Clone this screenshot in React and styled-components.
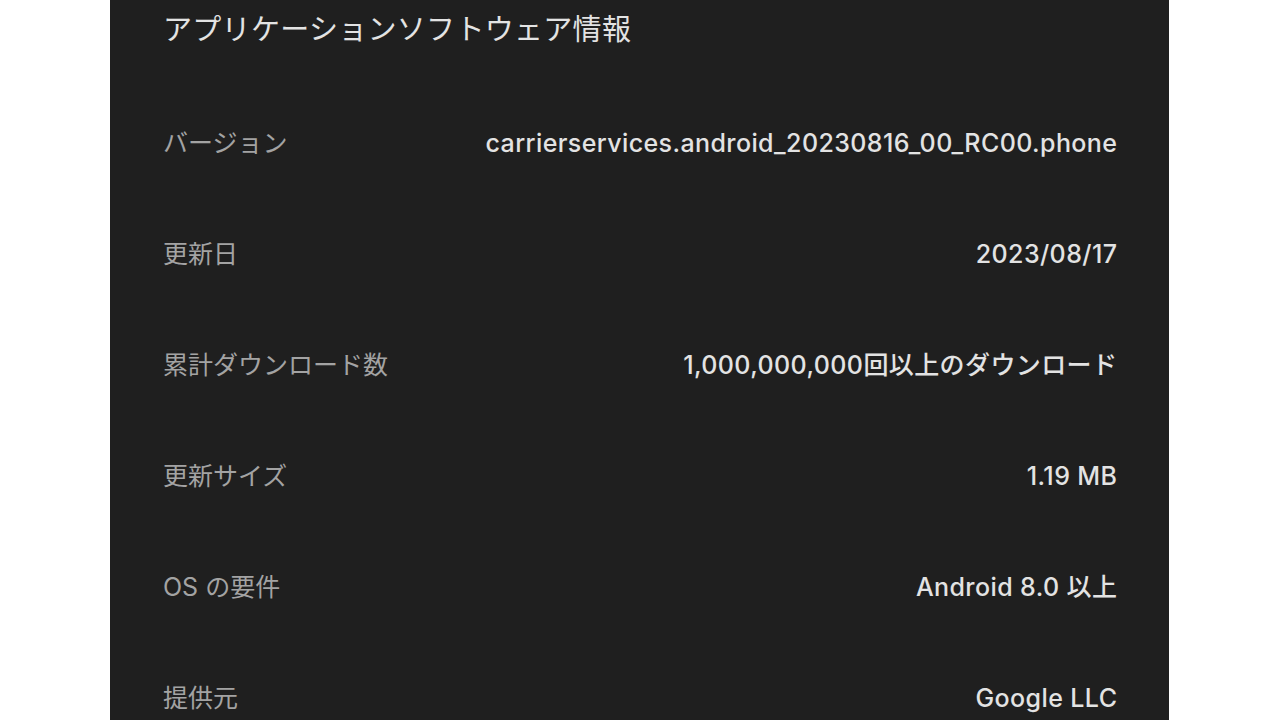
import styled, { createGlobalStyle } from 'styled-components';

const GlobalStyle = createGlobalStyle`
  html, body {
    margin: 0;
    padding: 0;
    background: #ffffff;
  }
  body {
    font-family: Inter, "Noto Sans CJK JP", sans-serif;
  }
`;

const Page = styled.div`
  width: 1280px;
  height: 720px;
  overflow: hidden;
  display: flex;
  justify-content: flex-start;
  background: #ffffff;
`;

const Panel = styled.section`
  margin-left: 110px;
  width: 1059px;
  height: 720px;
  background: #1f1f1f;
  box-sizing: border-box;
  padding: 0 52px 0 53px;
  display: flex;
  flex-direction: column;
`;

const Title = styled.h2`
  margin: 0 0 28px;
  height: 60px;
  line-height: 60px;
  font-size: 29px;
  font-weight: 400;
  color: #e3e3e3;
  letter-spacing: 0.3px;
`;

const Row = styled.div`
  flex: 0 0 111px;
  display: flex;
  align-items: center;
  justify-content: space-between;
  line-height: 1;
`;

const Label = styled.span`
  font-size: 25px;
  color: #a3a3a3;
  font-weight: 400;
`;

const Value = styled.span`
  font-size: 25px;
  color: #e3e3e3;
  font-weight: 500;
  letter-spacing: 0.4px;
  margin-right: -0.4px;
`;

const rows = [
  ['バージョン', 'carrierservices.android_20230816_00_RC00.phone'],
  ['更新日', '2023/08/17'],
  ['累計ダウンロード数', '1,000,000,000回以上のダウンロード'],
  ['更新サイズ', '1.19 MB'],
  ['OS の要件', 'Android 8.0 以上'],
  ['提供元', 'Google LLC'],
];

function App() {
  return (
    <>
      <GlobalStyle />
      <Page>
        <Panel>
          <Title>アプリケーションソフトウェア情報</Title>
          {rows.map(([label, value]) => (
            <Row key={label}>
              <Label>{label}</Label>
              <Value>{value}</Value>
            </Row>
          ))}
        </Panel>
      </Page>
    </>
  );
}

export default App;
